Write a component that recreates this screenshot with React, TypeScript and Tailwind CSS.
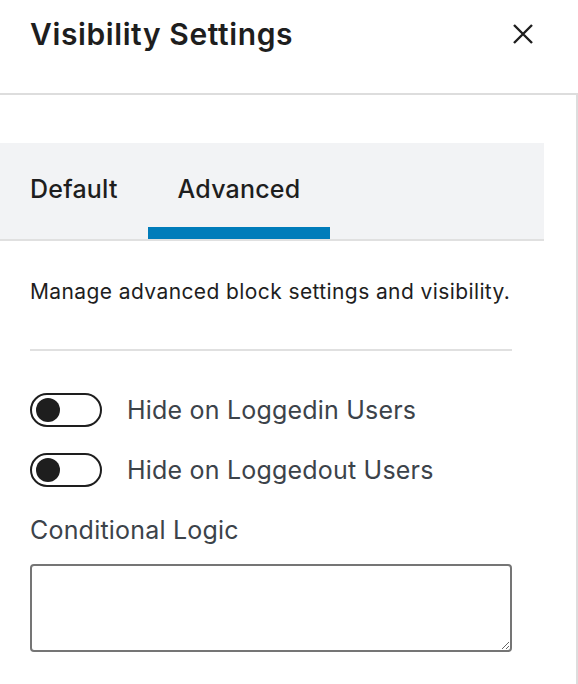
import { useState } from 'react'

function Toggle({ label }: { label: string }) {
  const [on, setOn] = useState(false)
  return (
    <label className="flex items-center gap-[25px] cursor-pointer">
      <button
        type="button"
        onClick={() => setOn(!on)}
        className={`w-[72px] h-[34px] rounded-full border-2 border-[#1e1e1e] flex items-center px-[4px] ${on ? 'justify-end bg-[#007cba]' : 'justify-start bg-white'}`}
      >
        <span className={`block w-[24px] h-[24px] rounded-full ${on ? 'bg-white' : 'bg-[#1e1e1e]'}`}></span>
      </button>
      <span className="text-[25px] tracking-[0.2px] text-[#3c434a] leading-none">{label}</span>
    </label>
  )
}

export default function App() {
  const [tab, setTab] = useState('Advanced')
  const tabs = ['Default', 'Advanced']

  return (
    <div className="w-[578px] h-[684px] bg-white overflow-hidden font-['Inter',sans-serif] text-[#1e1e1e]">
      {/* Header */}
      <div className="h-[93px] flex items-center justify-between pl-[30px] pr-[44px]">
        <h1 className="text-[30px] font-semibold tracking-[0.6px] -mt-[24px]">Visibility Settings</h1>
        <button className="-mt-[26px] text-[#1e1e1e]" aria-label="Close">
          <svg width="22" height="22" viewBox="0 0 22 22" fill="none" stroke="currentColor" strokeWidth="2.4">
            <path d="M2 2 L20 20 M20 2 L2 20" />
          </svg>
        </button>
      </div>

      {/* Panel */}
      <div className="border-t-2 border-r-2 border-[#dddddd] w-[578px] h-[591px] pt-[48px]">
        <div className="w-[544px] bg-[#f2f3f5] border-b-2 border-[#e0e0e0] flex h-[98px]">
          {tabs.map(t => (
            <button
              key={t}
              onClick={() => setTab(t)}
              className="relative px-[30px] h-full flex items-center text-[25px] tracking-[0.2px] font-medium text-[#1e1e1e] -mb-[2px]"
            >
              <span className="-mt-[2px]">{t}</span>
              {tab === t && <span className="absolute left-0 right-0 bottom-0 h-[12px] bg-[#007cba]"></span>}
            </button>
          ))}
        </div>

        <div className="pl-[30px] pr-[64px]">
          <p className="text-[21px] tracking-[0.4px] mt-[38px] leading-[26px] text-[#1e1e1e]">Manage advanced block settings and visibility.</p>
          <div className="h-[2px] bg-[#e0e0e0] mt-[44px]"></div>

          <div className="flex flex-col gap-[26px] mt-[42px]">
            <Toggle label="Hide on Loggedin Users" />
            <Toggle label="Hide on Loggedout Users" />
          </div>

          <div className="mt-[28px] text-[25px] tracking-[0.2px] text-[#3c434a] leading-[30px]">Conditional Logic</div>
          <textarea className="block mt-[19px] w-full h-[88px] border-2 border-[#757575] rounded-[4px] outline-none"></textarea>
        </div>
      </div>
    </div>
  )
}
